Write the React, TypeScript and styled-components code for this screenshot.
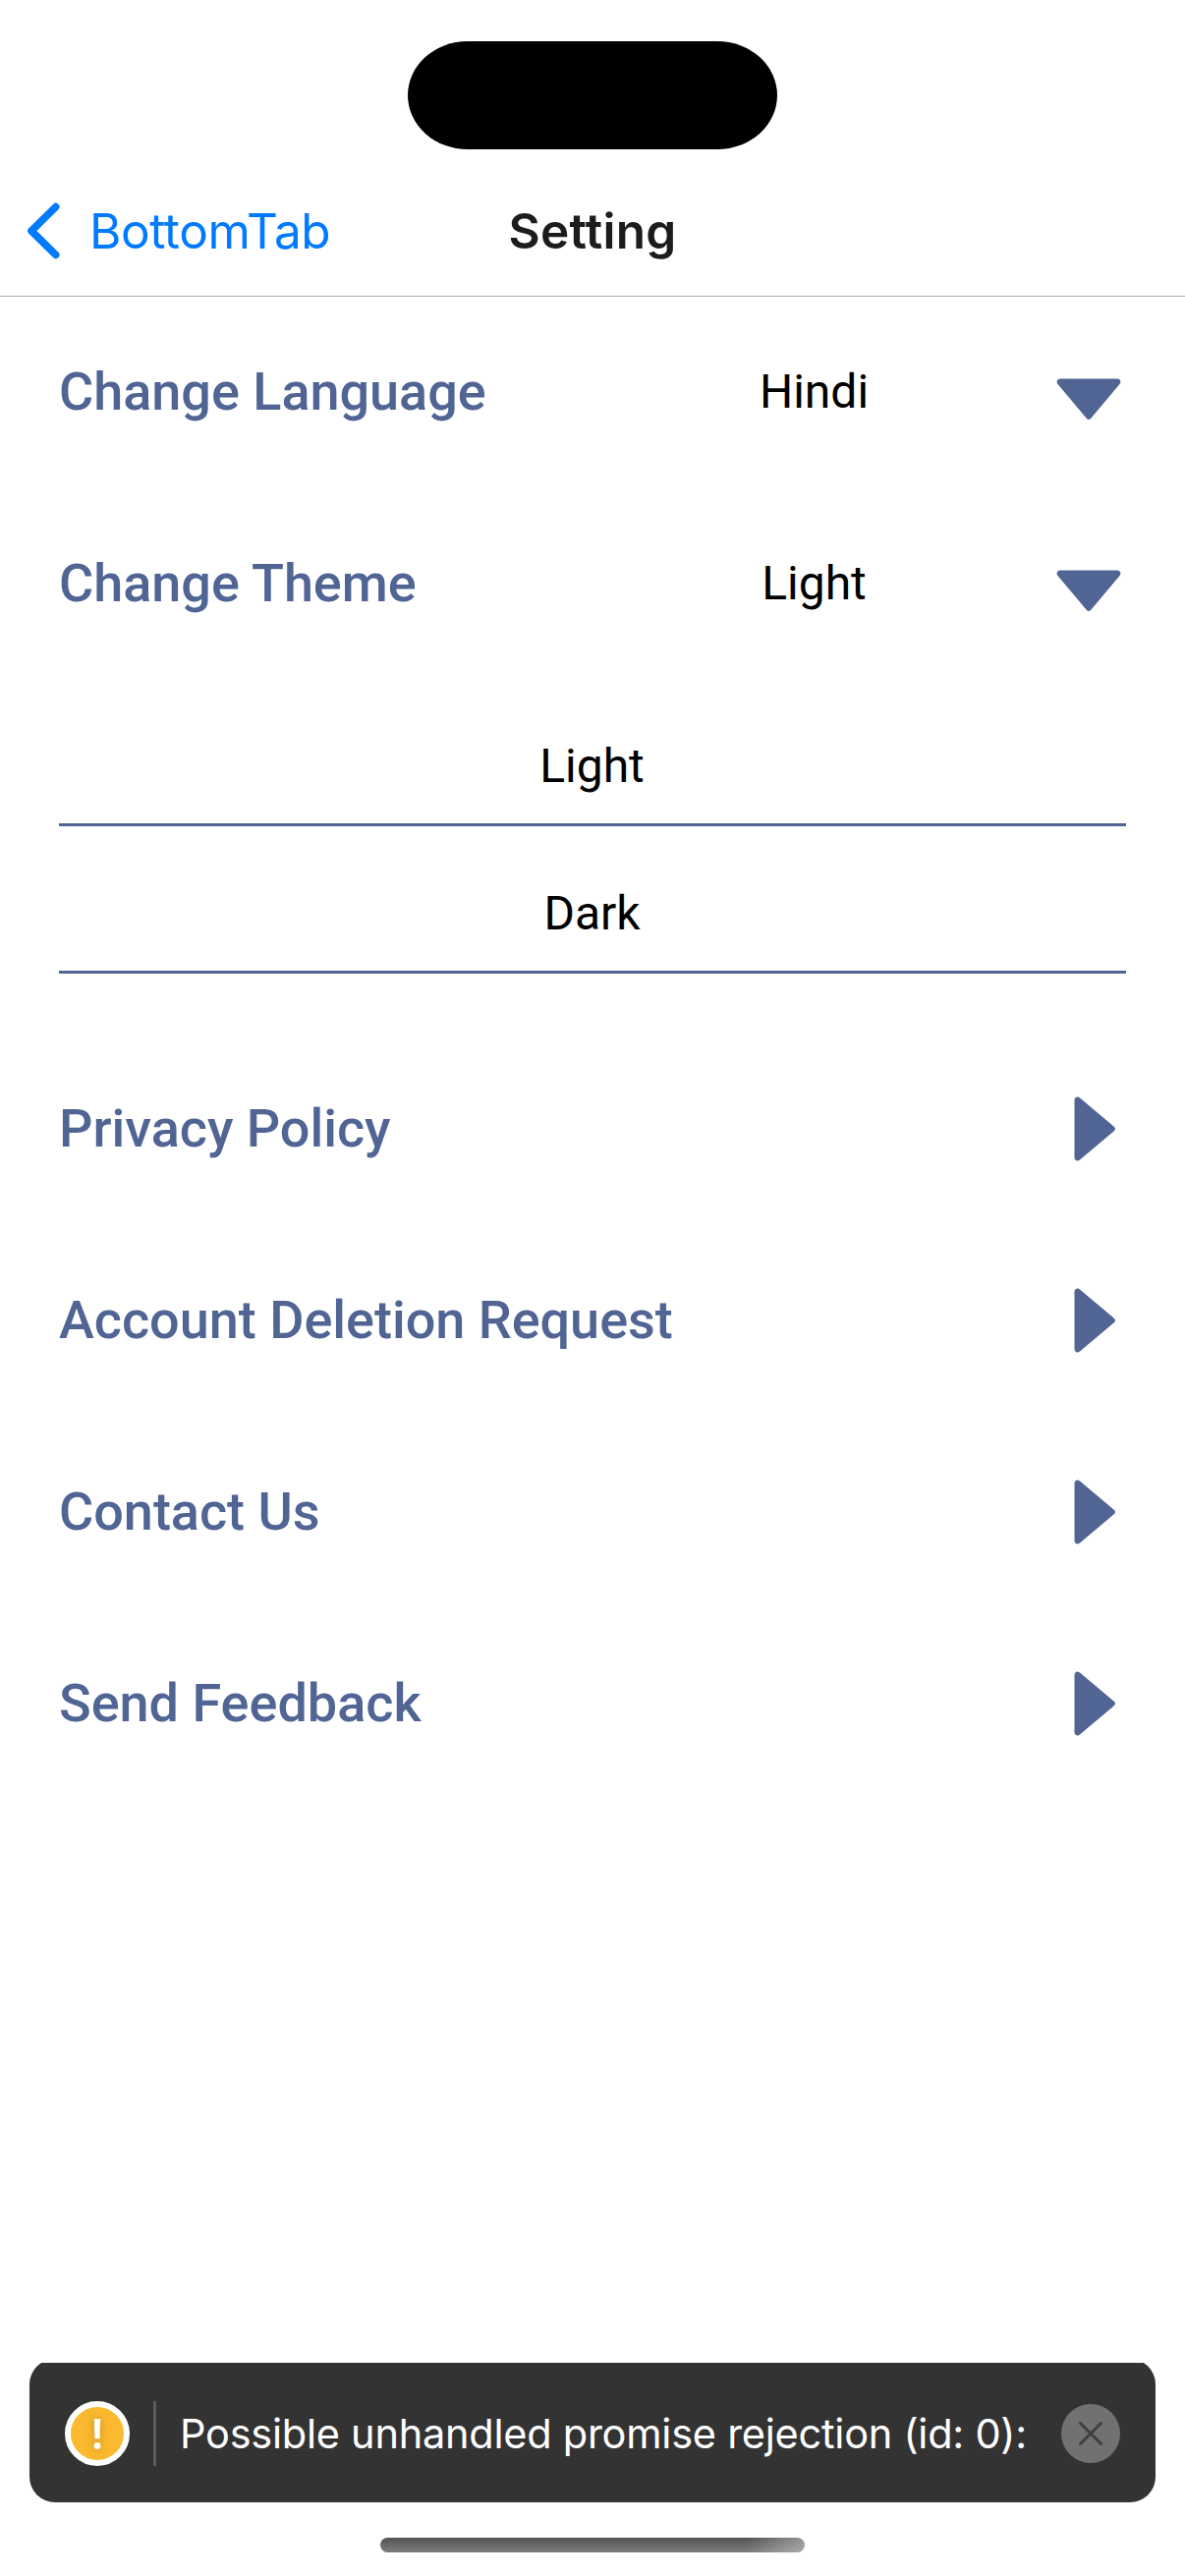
import React from 'react';
import styled, { createGlobalStyle } from 'styled-components';

const accent = '#506593';

const GlobalStyle = createGlobalStyle`
  * { box-sizing: border-box; }
  body { margin: 0; background: #fff; }
`;

const Screen = styled.div`
  width: 1206px;
  height: 2622px;
  display: flex;
  flex-direction: column;
  overflow: hidden;
  background: #fff;
  font-family: Roboto, sans-serif;
`;

const StatusBar = styled.div`
  height: 170px;
  padding-top: 42px;
  display: flex;
  justify-content: center;
  flex: none;
`;

const Island = styled.div`
  width: 376px;
  height: 110px;
  border-radius: 61px / 55px;
  background: #000;
`;

const NavBar = styled.header`
  height: 132px;
  flex: none;
  display: grid;
  grid-template-columns: 1fr auto 1fr;
  align-items: center;
  padding-bottom: 2px;
  border-bottom: 1px solid #adadad;
  font-family: Inter, sans-serif;
  font-size: 49.5px;
  line-height: 60px;
`;

const BackButton = styled.button`
  display: flex;
  align-items: center;
  gap: 30px;
  padding: 0 0 0 27px;
  border: 0;
  background: none;
  color: #007aff;
  font: inherit;
  letter-spacing: -0.4px;
`;

const NavTitle = styled.h1`
  margin: 0;
  font: inherit;
  font-weight: 600;
  letter-spacing: 0.3px;
  color: #1c1c1e;
`;

const List = styled.main`
  flex: 1;
  padding: 44px 60px 0;
`;

const Group = styled.section`
  display: flex;
  flex-direction: column;
  gap: 90px;
`;

const Row = styled.div`
  height: 105px;
  display: flex;
  align-items: center;
`;

const Label = styled.span`
  flex: 1;
  font-size: 54px;
  line-height: 64px;
  font-weight: 500;
  letter-spacing: -0.02px;
  color: ${accent};
`;

const Value = styled.span`
  width: 240px;
  margin-right: 126px;
  text-align: center;
  font-size: 48px;
  line-height: 56px;
  color: #000;
`;

const ArrowSlot = styled.span<{ $down?: boolean }>`
  display: flex;
  padding: ${(p) => (p.$down ? '15px 5.500px 0 0' : '0 10px 0 0')};
`;

const Options = styled.ul`
  list-style: none;
  margin: 45px 0 105px;
  padding: 0;
`;

const Option = styled.li`
  height: 150px;
  padding: 30px 1px 0 0;
  display: flex;
  align-items: center;
  justify-content: center;
  border-bottom: 3px solid ${accent};
  font-size: 48px;
  line-height: 56px;
  color: #000;
`;

const ToastClip = styled.div`
  flex: none;
  height: 142px;
  margin: 0 30px;
  display: flex;
  align-items: flex-end;
  overflow: hidden;
`;

const Toast = styled.div`
  width: 100%;
  flex: none;
  height: 146px;
  padding: 6px 36px 0;
  display: flex;
  align-items: center;
  border-radius: 26px;
  background: #333;
  color: #fff;
  font-family: Inter, sans-serif;
`;

const WarningBadge = styled.span`
  width: 66px;
  height: 66px;
  flex: none;
  display: flex;
  align-items: center;
  justify-content: center;
  border: 6px solid #fff;
  border-radius: 50%;
  background: #fab92f;

  svg {
    flex: none;
    filter: drop-shadow(0 0 4px rgba(90, 60, 0, 0.35));
  }
`;

const Divider = styled.span`
  width: 3px;
  height: 66px;
  margin: 0 24px;
  background: #5c5c5c;
`;

const ToastText = styled.span`
  flex: 1;
  white-space: nowrap;
  font-size: 41.5px;
  line-height: 54px;
  letter-spacing: -0.25px;
`;

const CloseButton = styled.button`
  width: 60px;
  height: 60px;
  flex: none;
  padding: 0;
  display: flex;
  align-items: center;
  justify-content: center;
  border: 0;
  border-radius: 50%;
  background: #717171;
`;

const HomeArea = styled.footer`
  flex: none;
  height: 75px;
  padding-top: 36px;
  display: flex;
  justify-content: center;
`;

const HomeIndicator = styled.span`
  width: 432px;
  height: 15px;
  border-radius: 8px;
  background:
    linear-gradient(100deg, transparent 86%, rgba(200, 200, 200, 0.6) 100%),
    linear-gradient(#525252, #7c7c7c);
`;

function DownArrow() {
  return (
    <svg width="66" height="43" viewBox="0 0 66 43">
      <path d="M4 .5H62C65 .5 66.500 3.500 64.500 6L35.500 40.500Q33 43.500 30.500 40.500L1.500 6C-.5 3.500 1 .5 4 .5Z" fill={accent} />
    </svg>
  );
}

function RightArrow() {
  return (
    <svg width="43" height="66" viewBox="0 0 43 66">
      <path d="M.5 4C.5 1 3.500-.5 6 1.500L40.500 30.500Q43.500 33 40.500 35.500L6 64.500C3.500 66.500 .5 65 .5 62Z" fill={accent} />
    </svg>
  );
}

const pickers = [
  { label: 'Change Language', value: 'Hindi' },
  { label: 'Change Theme', value: 'Light' },
];
const themes = ['Light', 'Dark'];
const links = ['Privacy Policy', 'Account Deletion Request', 'Contact Us', 'Send Feedback'];

export default function App() {
  return (
    <Screen>
      <GlobalStyle />
      <StatusBar>
        <Island />
      </StatusBar>
      <NavBar>
        <BackButton>
          <svg width="34" height="58" viewBox="0 0 34 58" fill="none">
            <path d="M29.700 4.600L5 29L29.700 53.400" stroke="#007aff" strokeWidth="7.600" strokeLinecap="round" strokeLinejoin="round" />
          </svg>
          BottomTab
        </BackButton>
        <NavTitle>Setting</NavTitle>
      </NavBar>
      <List>
        <Group>
          {pickers.map((p) => (
            <Row key={p.label}>
              <Label>{p.label}</Label>
              <Value>{p.value}</Value>
              <ArrowSlot $down>
                <DownArrow />
              </ArrowSlot>
            </Row>
          ))}
        </Group>
        <Options>
          {themes.map((t) => (
            <Option key={t}>{t}</Option>
          ))}
        </Options>
        <Group>
          {links.map((l) => (
            <Row key={l}>
              <Label>{l}</Label>
              <ArrowSlot>
                <RightArrow />
              </ArrowSlot>
            </Row>
          ))}
        </Group>
      </List>
      <ToastClip>
        <Toast>
          <WarningBadge>
            <svg width="54" height="54" viewBox="0 0 54 54">
              <path d="M23.800 12H30.200L29.500 32.300H24.500Z" fill="#fff" />
              <circle cx="27" cy="39.400" r="3.400" fill="#fff" />
            </svg>
          </WarningBadge>
          <Divider />
          <ToastText>Possible unhandled promise rejection (id: 0):</ToastText>
          <CloseButton aria-label="Dismiss">
            <svg width="24" height="24" viewBox="0 0 24 24">
              <path d="M1.500 1.500L22.500 22.500M22.500 1.500L1.500 22.500" stroke="#3f3f3f" strokeWidth="3" strokeLinecap="round" />
            </svg>
          </CloseButton>
        </Toast>
      </ToastClip>
      <HomeArea>
        <HomeIndicator />
      </HomeArea>
    </Screen>
  );
}
